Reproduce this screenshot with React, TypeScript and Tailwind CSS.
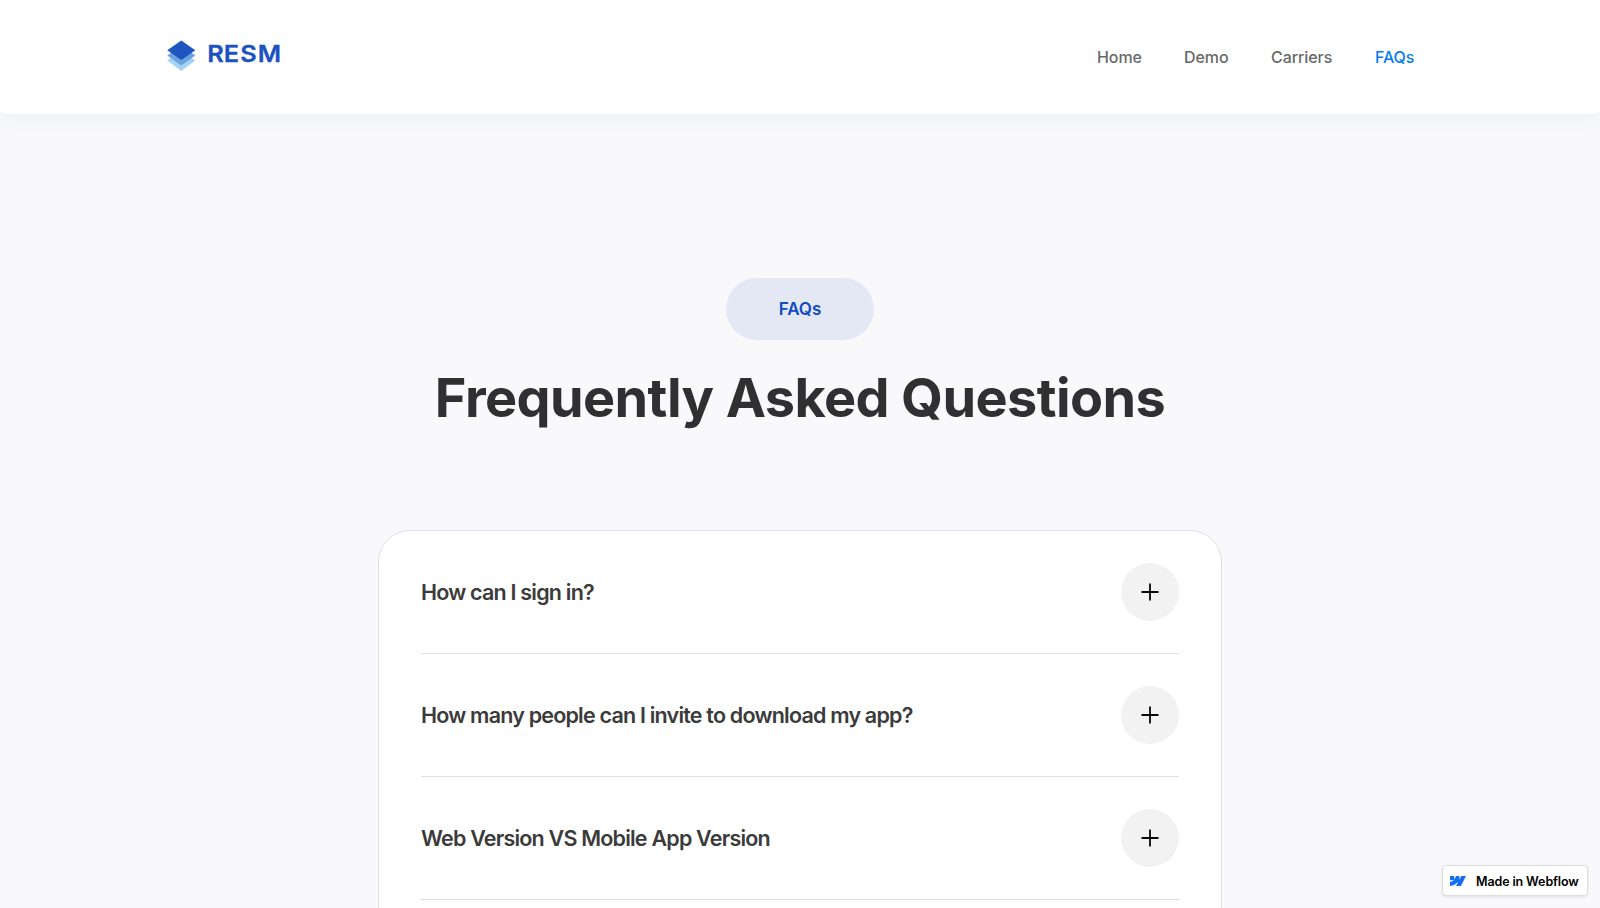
import React from "react";

const links = [
  { label: "Home", cls: "w-[45px] mr-[42px]" },
  { label: "Demo", cls: "w-[45px] mr-[42px]" },
  { label: "Carriers", cls: "w-[62px] mr-[42px]" },
];

const questions = [
  "How can I sign in?",
  "How many people can I invite to download my app?",
  "Web Version VS Mobile App Version",
];

function Logo() {
  return (
    <a href="#" aria-label="RESM" className="flex items-center">
      <svg width="120" height="36" viewBox="0 0 120 36">
        <path d="M15.3 12.5 29.3 22.5 15.3 33 1.3 22.5Z" fill="#a3d3f5" />
        <path d="M15.3 7.5 29.3 17.5 15.3 27.5 1.3 17.5Z" fill="#6ba3dd" />
        <path d="M15.3 2.5 29.3 12.2 15.3 22 1.3 12.2Z" fill="#1f55c1" />
        <text
          x="0 15.1 30 46"
          y="0"
          transform="translate(41.2 24) scale(1.1 1)"
          stroke="#1c52c0"
          strokeWidth="0.3"
          className="fill-[#1c52c0] font-['Inter',sans-serif] text-[23px] font-semibold"
        >
          RESM
        </text>
      </svg>
    </a>
  );
}

function Question({ text }: { text: string }) {
  return (
    <div className="flex h-[123px] items-center justify-between border-b border-[#dedfe9]">
      <h2 className="whitespace-nowrap text-[21.5px] font-semibold tracking-[-0.037em] text-[#3b3b3b]">{text}</h2>
      <button aria-label="Open" className="flex size-[58px] items-center justify-center rounded-full bg-[#f2f2f2]">
        <svg width="18" height="18" viewBox="0 0 18 18">
          <path d="M9 .5v17M.5 9h17" stroke="#080808" strokeWidth="1.8" />
        </svg>
      </button>
    </div>
  );
}

export default function App() {
  return (
    <div className="relative flex h-[908px] flex-col overflow-hidden bg-[#f9f9fc] font-['Inter',sans-serif]">
      <header className="relative flex h-[114px] shrink-0 items-center justify-between rounded-b-md bg-white pl-[166px] pr-[185px] shadow-[0_5px_20px_rgba(30,120,140,0.06)]">
        <div className="pb-[2px]">
          <Logo />
        </div>
        <nav className="flex whitespace-nowrap text-[16px] font-medium leading-6 tracking-[-0.005em] text-[#686868]">
          {links.map((l) => (
            <a key={l.label} href="#" className={l.cls}>
              {l.label}
            </a>
          ))}
          <a href="#" className="w-[40px] text-[#087cf5]">
            FAQs
          </a>
        </nav>
      </header>

      <main className="flex flex-col items-center pt-[164px]">
        <div className="flex h-[62px] w-[148px] items-center justify-center rounded-full bg-[#e4e8f5] pt-[2px] text-[17px] font-semibold text-[#104bc1]">
          FAQs
        </div>
        <h1 className="mt-[24px] whitespace-nowrap text-[54px] font-bold leading-[68px] tracking-[-0.011em] text-[#303030]">
          Frequently Asked Questions
        </h1>
        <section className="mt-[98px] h-[520px] w-[844px] shrink-0 rounded-[32px] border border-[#dfe0eb] bg-white px-[42px]">
          {questions.map((q) => (
            <Question key={q} text={q} />
          ))}
        </section>
      </main>

      <a
        href="#"
        className="absolute bottom-[12px] right-[12px] flex h-[31px] w-[146px] items-center rounded-[4px] border border-[#dedee1] bg-white pl-[7px] shadow-[0_1px_3px_rgba(0,0,0,0.1)]"
      >
        <svg width="16" height="10" viewBox="0 0 16 10" className="mr-[10px]">
          <path
            d="M16 0 10.9 10H6.1L8.2 5.8H8.1C6.4 8.1 3.8 9.6 0 10V5.9S2.4 5.8 3.8 4.3H0V0H4.3V3.5H4.4L6.1 0H9.4V3.5H9.5L11.3 0Z"
            fill="#146ef5"
          />
        </svg>
        <span className="whitespace-nowrap pt-[3px] text-[12.5px] font-semibold tracking-[-0.01em] text-black">
          Made in Webflow
        </span>
      </a>
    </div>
  );
}
